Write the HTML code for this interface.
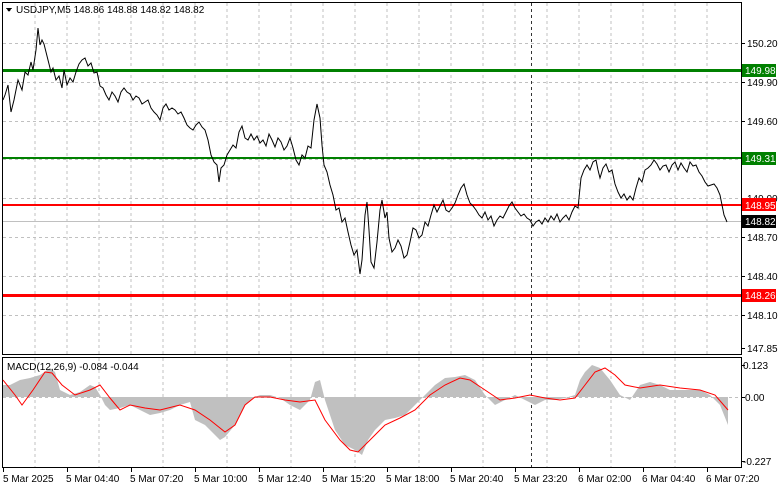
<!DOCTYPE html><html><head><style>
body{margin:0;width:781px;height:489px;background:#fff;overflow:hidden;font-family:"Liberation Sans",sans-serif;}
svg text{font-family:"Liberation Sans",sans-serif;font-size:10px;}
</style></head><body>
<svg width="781" height="489" xmlns="http://www.w3.org/2000/svg" shape-rendering="crispEdges">
<g stroke="#c0c0c0" stroke-dasharray="3,3" stroke-width="1">
<path d="M35 3V355M67 3V355M99 3V355M131 3V355M163 3V355M195 3V355M227 3V355M259 3V355M291 3V355M323 3V355M355 3V355M387 3V355M419 3V355M451 3V355M483 3V355M515 3V355M547 3V355M579 3V355M611 3V355M643 3V355M675 3V355M707 3V355"/>
<path d="M35 358V467M99 358V467M163 358V467M227 358V467M291 358V467M355 358V467M419 358V467M483 358V467M547 358V467M611 358V467M675 358V467"/>
<path d="M3 43.5H741M3 82.5H741M3 121.5H741M3 159.5H741M3 198.5H741M3 237.5H741M3 276.5H741M3 315.5H741M3 397.5H741"/>
</g>
<path d="M531.5 3V467" stroke="#333" stroke-dasharray="3,3"/>
<path d="M3 221.5H741" stroke="#c0c0c0"/>
<rect x="2.5" y="2.5" width="739" height="352" fill="none" stroke="#000"/>
<rect x="2.5" y="357.5" width="739" height="110" fill="none" stroke="#000"/>
<rect x="3" y="69" width="738" height="3" fill="#008000"/>
<rect x="3" y="157" width="738" height="2" fill="#008000"/>
<rect x="3" y="204" width="738" height="2" fill="#ff0000"/>
<rect x="3" y="294" width="738" height="3" fill="#ff0000"/>
<polyline shape-rendering="auto" fill="none" stroke="#000" stroke-width="1" points="3,100 5,95 8,85 11,112 14,100 18,80 22,90 25,72 28,75 31,62 33,70 36,50 38,28 40,45 42,40 44,44 46,52 48,60 51,72 53,68 56,80 59,76 62,88 64,70 67,85 70,78 73,82 76,72 79,64 82,60 85,58 88,66 91,63 94,73 97,72 100,86 103,88 106,95 109,100 112,92 115,96 118,102 121,92 124,88 127,92 130,94 133,100 136,96 139,98 142,104 145,102 148,100 151,108 154,112 157,115 160,120 163,108 166,104 169,110 172,108 175,110 178,114 181,112 184,118 187,125 190,128 193,130 196,125 199,122 202,127 205,130 208,140 211,155 214,162 217,165 219,182 221,168 224,165 227,155 230,150 233,145 236,148 239,132 242,126 245,138 248,140 251,134 254,140 257,136 260,143 263,140 266,146 269,134 272,140 275,147 278,138 281,142 284,150 287,146 290,138 293,148 296,160 299,165 302,155 305,158 308,146 311,148 314,120 317,104 320,118 322,145 324,165 327,172 330,185 333,195 336,210 339,208 342,222 345,218 348,232 351,245 354,255 357,250 360,274 362,260 365,215 367,202 369,230 371,262 374,268 377,242 380,210 382,200 385,218 387,212 389,238 392,252 395,248 398,240 401,246 404,258 407,255 410,242 413,228 416,230 419,238 422,235 425,222 428,226 431,215 434,205 437,212 440,206 443,200 446,210 449,212 452,208 455,203 458,195 461,188 464,184 467,195 470,203 473,206 476,210 479,215 482,218 485,212 488,220 491,216 494,226 497,220 500,216 503,218 506,212 509,206 512,202 515,208 518,212 521,216 524,214 527,218 530,220 533,226 536,222 539,220 542,224 545,218 548,222 551,216 554,220 557,214 560,222 563,218 566,215 569,220 572,212 575,206 578,208 581,178 584,170 587,165 590,170 593,162 596,160 598,170 600,178 603,168 606,164 609,172 612,170 615,184 618,192 621,198 624,194 627,200 630,196 633,200 636,188 639,178 642,182 645,170 648,168 651,165 654,160 657,164 660,170 663,166 666,165 669,172 672,165 675,162 678,170 681,163 684,168 687,172 690,162 693,166 696,165 699,172 702,176 705,182 708,186 711,185 714,184 717,188 720,195 722,205 724,215 727,222"/>
<polygon shape-rendering="auto" fill="#c0c0c0" points="3,397 3,385 10,385 20,380 30,378 40,375 50,368 55,372 60,390 70,395 80,392 90,385 95,387 100,395 105,405 110,410 120,408 130,405 140,410 150,415 160,413 170,410 180,405 190,402 195,420 205,425 215,435 220,440 225,437 235,425 245,405 255,397 260,395 270,395 280,398 290,405 300,410 310,400 315,382 320,380 325,400 335,430 345,445 355,450 362,455 368,440 375,430 385,420 395,418 405,415 415,405 425,395 435,385 445,378 455,377 465,375 475,380 485,395 495,405 505,400 515,395 525,400 535,405 545,400 555,400 565,398 575,395 580,380 585,372 592,365 600,368 610,380 620,395 630,400 640,385 650,382 660,385 670,390 680,390 690,390 700,390 710,395 720,405 728,425 728,397"/>
<polyline shape-rendering="auto" fill="none" stroke="#ff0000" stroke-width="1" points="3,380 15,395 22,405 33,390 45,372 52,373 62,385 75,395 90,390 100,385 110,398 120,410 130,405 145,408 160,410 180,405 195,410 210,420 225,432 235,425 245,405 255,397 270,397 285,400 300,402 315,400 325,420 340,440 350,450 358,452 370,440 385,425 400,418 415,410 430,395 445,385 460,378 470,380 485,390 500,400 515,398 530,395 545,398 560,400 575,398 585,385 595,372 605,368 615,375 625,385 640,388 660,385 680,388 700,390 715,395 728,410"/>
<polygon points="6,8 12,8 9,12" fill="#000"/>
<text x="16" y="13" fill="#000">USDJPY,M5  148.86 148.88 148.82 148.82</text>
<text x="7" y="370" fill="#000">MACD(12,26,9) -0.084 -0.044</text>
<g fill="#000">
<path d="M741 43.5h4M741 82.5h4M741 121.5h4M741 198.5h4M741 237.5h4M741 276.5h4M741 315.5h4M741 348.5h4M741 365.5h4M741 397.5h4M741 461.5h4" stroke="#000"/>
<text x="747" y="47">150.20</text><text x="747" y="86">149.90</text><text x="747" y="125">149.60</text>
<text x="747" y="202">149.00</text><text x="747" y="241">148.70</text><text x="747" y="280">148.40</text>
<text x="747" y="319">148.10</text><text x="747" y="352">147.85</text>
<text x="743" y="369">0.123</text><text x="745" y="401">0.00</text><text x="743" y="465">-0.227</text>
</g>
<rect x="742" y="64" width="34" height="13" fill="#008000"/><text x="745" y="74" fill="#fff">149.98</text>
<rect x="742" y="152" width="34" height="13" fill="#008000"/><text x="745" y="162" fill="#fff">149.31</text>
<rect x="742" y="198" width="34" height="13" fill="#ff0000"/><text x="745" y="209" fill="#fff">148.95</text>
<rect x="742" y="215" width="34" height="13" fill="#000"/><text x="745" y="225" fill="#fff">148.82</text>
<rect x="742" y="289" width="34" height="13" fill="#ff0000"/><text x="745" y="299" fill="#fff">148.26</text>
<g stroke="#000"><path d="M3.5 468v4M67.5 468v4M131.5 468v4M195.5 468v4M259.5 468v4M323.5 468v4M387.5 468v4M451.5 468v4M515.5 468v4M579.5 468v4M643.5 468v4M707.5 468v4"/></g>
<g fill="#000">
<text x="3" y="482">5 Mar 2025</text><text x="66" y="482">5 Mar 04:40</text><text x="130" y="482">5 Mar 07:20</text>
<text x="194" y="482">5 Mar 10:00</text><text x="258" y="482">5 Mar 12:40</text><text x="322" y="482">5 Mar 15:20</text>
<text x="386" y="482">5 Mar 18:00</text><text x="450" y="482">5 Mar 20:40</text><text x="514" y="482">5 Mar 23:20</text>
<text x="578" y="482">6 Mar 02:00</text><text x="642" y="482">6 Mar 04:40</text><text x="706" y="482">6 Mar 07:20</text>
</g>
</svg>
</body></html>
